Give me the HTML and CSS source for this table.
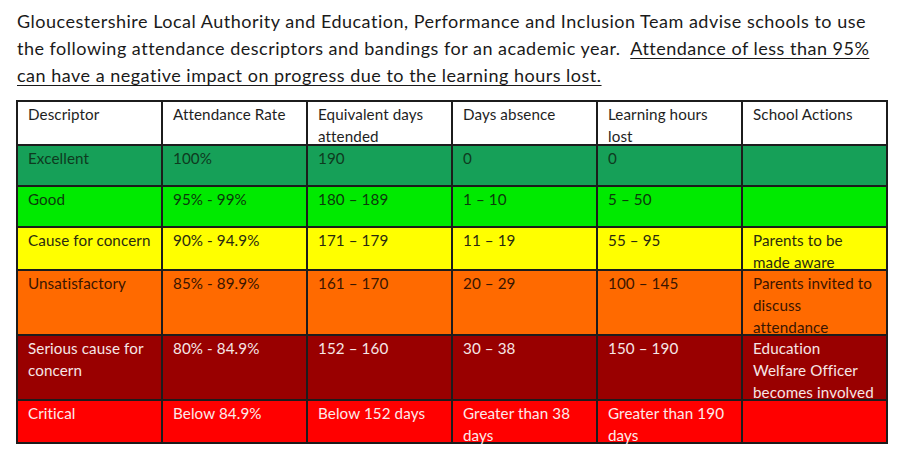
FILE: index.html
```html
<!DOCTYPE html>
<html lang="en">
<head>
<meta charset="utf-8">
<title>Attendance descriptors</title>
<link rel="stylesheet" href="styles.css">
</head>
<body>
<p class="intro">Gloucestershire Local Authority and Education, Performance and Inclusion Team advise schools to use<br>the following attendance descriptors and bandings for an academic year.&nbsp; <u>Attendance of less than 95%<br>can have a negative impact on progress due to the learning hours lost.</u></p>
<table class="bands">
  <tr class="head">
    <td><div class="c">Descriptor</div></td>
    <td><div class="c">Attendance Rate</div></td>
    <td><div class="c">Equivalent days attended</div></td>
    <td><div class="c">Days absence</div></td>
    <td><div class="c">Learning hours lost</div></td>
    <td><div class="c">School Actions</div></td>
  </tr>
  <tr class="excellent">
    <td><div class="c">Excellent</div></td>
    <td><div class="c">100%</div></td>
    <td><div class="c">190</div></td>
    <td><div class="c">0</div></td>
    <td><div class="c">0</div></td>
    <td></td>
  </tr>
  <tr class="good">
    <td><div class="c">Good</div></td>
    <td><div class="c">95% - 99%</div></td>
    <td><div class="c">180 – 189</div></td>
    <td><div class="c">1 – 10</div></td>
    <td><div class="c">5 – 50</div></td>
    <td></td>
  </tr>
  <tr class="cause">
    <td><div class="c">Cause for concern</div></td>
    <td><div class="c">90% - 94.9%</div></td>
    <td><div class="c">171 – 179</div></td>
    <td><div class="c">11 – 19</div></td>
    <td><div class="c">55 – 95</div></td>
    <td><div class="c">Parents to be made aware</div></td>
  </tr>
  <tr class="unsat">
    <td><div class="c">Unsatisfactory</div></td>
    <td><div class="c">85% - 89.9%</div></td>
    <td><div class="c">161 – 170</div></td>
    <td><div class="c">20 – 29</div></td>
    <td><div class="c">100 – 145</div></td>
    <td><div class="c">Parents invited to discuss attendance</div></td>
  </tr>
  <tr class="serious">
    <td><div class="c">Serious cause for concern</div></td>
    <td><div class="c">80% - 84.9%</div></td>
    <td><div class="c">152 – 160</div></td>
    <td><div class="c">30 – 38</div></td>
    <td><div class="c">150 – 190</div></td>
    <td><div class="c">Education Welfare Officer becomes involved</div></td>
  </tr>
  <tr class="critical">
    <td><div class="c">Critical</div></td>
    <td><div class="c">Below 84.9%</div></td>
    <td><div class="c">Below 152 days</div></td>
    <td><div class="c">Greater than 38 days</div></td>
    <td><div class="c">Greater than 190 days</div></td>
    <td></td>
  </tr>
</table>
</body>
</html>
```
FILE: styles.css
```css
html, body {
  margin: 0;
  padding: 0;
  background: #ffffff;
}
body {
  padding: 8px 16px 0 17px;
  font-family: Lato, "Open Sans", sans-serif;
  color: #1a1a1a;
}
.intro {
  margin: 0 0 11px 0;
  font-size: 18px;
  letter-spacing: 0.5px;
  line-height: 27px;
  white-space: nowrap;
}
.intro u {
  text-underline-offset: 3px;
  text-decoration-thickness: 1px;
}
.bands {
  border-collapse: collapse;
  margin-left: -1px;
  width: 871px;
  table-layout: fixed;
  font-size: 15.2px;
  letter-spacing: 0.1px;
  line-height: 22px;
}
.bands td {
  border: 2px solid #1c1c1c;
  vertical-align: top;
  padding: 1px 9px 0 10px;
  width: 145px;
  height: 41px;
  box-sizing: border-box;
}
.c {
  margin-bottom: -4px;
}
.head td { height: 44px; color: #1e1e1e; background: #fff; }
.excellent td { background: #16a058; color: #0e3a20; }
.good td { background: #00ea00; color: #0b3a0b; }
.cause td { background: #ffff00; color: #2a2a10; }
.unsat td { background: #ff6a00; color: #3a1500; height: 65px; }
.serious td { background: #990000; color: #f6e6e6; height: 62px; }
.critical td { background: #ff0000; color: #fbeaea; height: 41px; }
```
